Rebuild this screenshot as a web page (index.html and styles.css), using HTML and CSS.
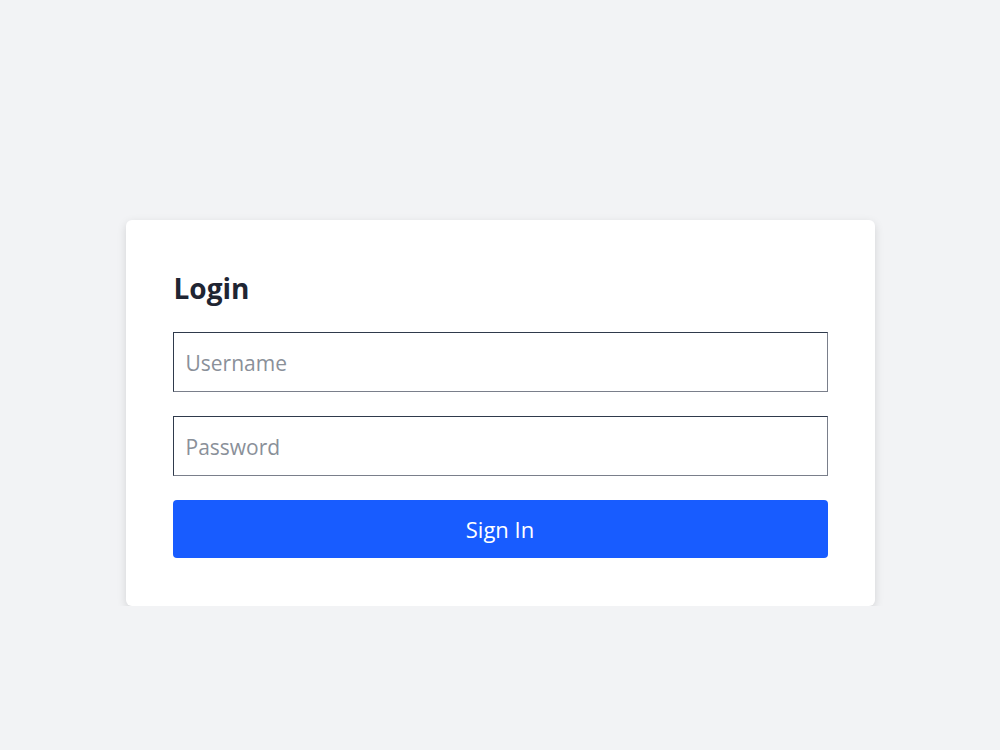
FILE: index.html
```html
<!DOCTYPE html>
<html lang="en">
<head>
    <meta charset="UTF-8">
    <meta name="viewport" content="width=device-width, initial-scale=1.0">
    <title>Login</title>
    <link rel="stylesheet" href="styles.css">
</head>
<body>
    <div class="page">
        <form class="login-card" onsubmit="return false;">
            <h1 class="login-title">Login</h1>
            <input type="text" class="login-input" placeholder="Username">
            <input type="password" class="login-input" placeholder="Password">
            <button type="submit" class="login-button">Sign In</button>
        </form>
    </div>
</body>
</html>
```

FILE: styles.css
```css
body {
    font-family: 'Open Sans', 'Noto Sans', sans-serif;
    background: #f2f3f5;
    margin: 0;
}
.page {
    display: flex;
    justify-content: center;
    padding-top: 220px;
}
.login-card {
    width: 749px;
    box-sizing: border-box;
    background: #ffffff;
    border-radius: 6px;
    padding: 48px 47px;
    box-shadow: 0 3px 10px rgba(0, 0, 0, 0.13);
    display: flex;
    flex-direction: column;
    gap: 24px;
}
.login-title {
    margin: 0 0 0 1px;
    font-size: 28px;
    line-height: 40px;
    font-weight: 700;
    color: #1f2533;
}
.login-input {
    height: 60px;
    box-sizing: border-box;
    border: 1px solid;
    border-color: #2f3a4c #7a7f8b #7a7f8b #2f3a4c;
    padding: 2px 12px 0;
    font-family: inherit;
    font-size: 21px;
    color: #1f2533;
    outline: none;
}
.login-input::placeholder {
    color: #8a9099;
}
.login-button {
    height: 58px;
    border: none;
    border-radius: 4px;
    background: #185cff;
    color: #ffffff;
    font-family: inherit;
    font-size: 22px;
    cursor: pointer;
}
```
